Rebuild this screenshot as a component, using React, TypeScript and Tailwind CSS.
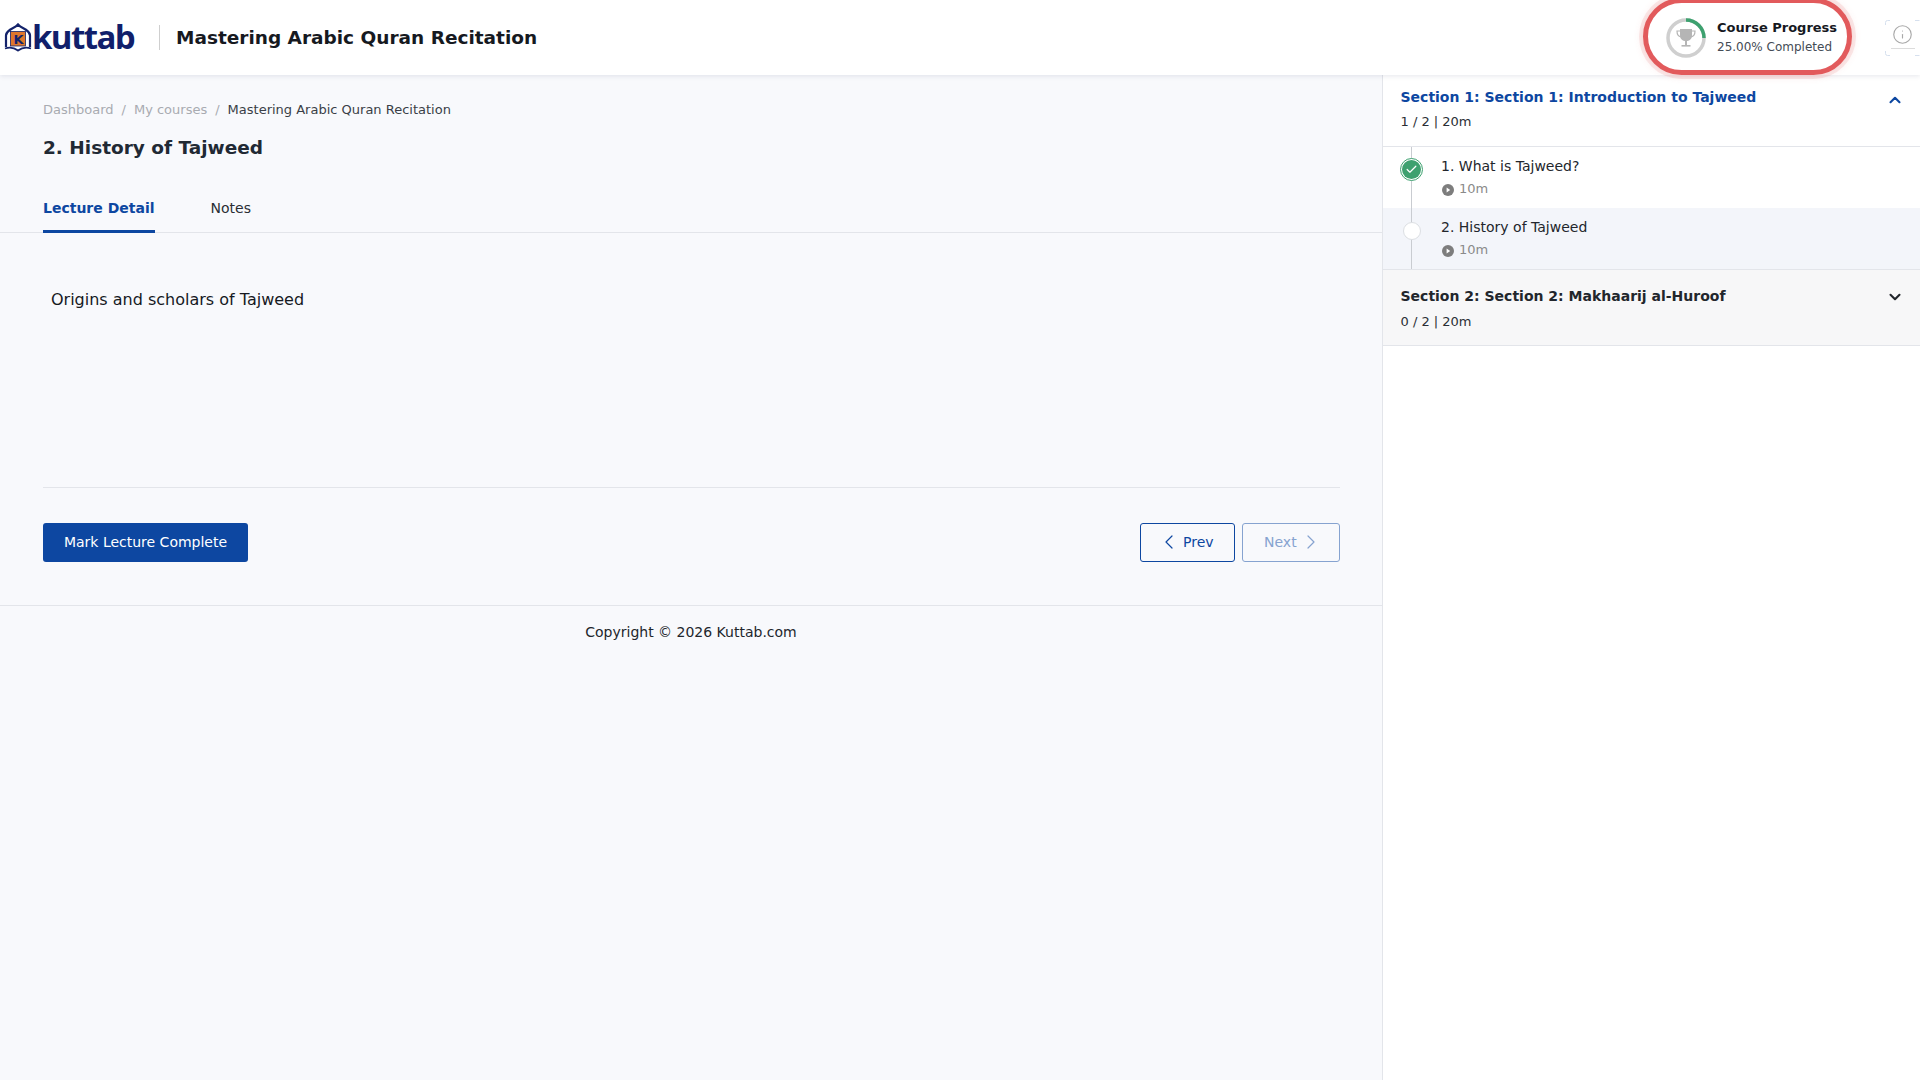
import React from 'react';
import { ChevronDown, ChevronLeft, ChevronRight, ChevronUp, Check, Info } from 'lucide-react';

function Logo() {
  return (
    <div className="flex items-center w-[136px] pl-[4px]">
      <svg width="28" height="30" viewBox="0 0 28 30" className="shrink-0">
        <path d="M2 24V12.5C2 9 4.5 8 6.5 6.5C9 5 12 4 14 1.5C16 4 19 5 21.5 6.5C23.5 8 26 9 26 12.5V24" fill="#fff" stroke="#14236b" strokeWidth="2.2" />
        <rect x="6.5" y="8.5" width="15" height="14.5" fill="#e0772c" stroke="#14236b" strokeWidth="0.8" />
        <text x="9.5" y="20.6" fontSize="13" fontWeight="700" fill="#14236b" fontFamily="'DejaVu Sans', sans-serif">K</text>
        <path d="M1 25.5C5 24 10 24.5 14 27.5C18 24.5 23 24 27 25.5" fill="none" stroke="#14236b" strokeWidth="1.8" />
      </svg>
      <span className="font-['Open_Sans',sans-serif] font-bold text-[33px] leading-none text-[#111f6b] tracking-[-1.6px] -mt-[2px]">kuttab</span>
    </div>
  );
}

function ProgressRing() {
  return (
    <svg width="40" height="40" viewBox="0 0 40 40" className="shrink-0 mt-[3px]">
      <circle cx="20" cy="20" r="18" fill="none" stroke="#cfcfcf" strokeWidth="3.5" />
      <path d="M20 2A18 18 0 0 1 38 20" fill="none" stroke="#3da16f" strokeWidth="3.5" />
      <path d="M14 11H26V17C26 21 23.5 23 20 23C16.5 23 14 21 14 17Z" fill="#b5b5b5" />
      <path d="M14 13H11C11 17 12.5 18.5 15 19M26 13H29C29 17 27.5 18.5 25 19" fill="none" stroke="#b5b5b5" strokeWidth="1.2" />
      <rect x="19" y="22" width="2" height="5" fill="#b5b5b5" />
      <rect x="15.5" y="27" width="9" height="1.6" fill="#b5b5b5" />
    </svg>
  );
}

function InfoBadge() {
  return (
    <div className="relative self-start ml-[33px] mt-[20px] w-[35px] h-[36px] flex justify-center text-[#a8a8a8]">
      <svg width="35" height="36" viewBox="0 0 35 36" className="absolute inset-0" fill="none" stroke="#d6e0ee" strokeWidth="1">
        <path d="M0.5 5V2.5Q0.5 0.5 2.5 0.5H5M30 0.5H34.5M0.5 31V33.5Q0.5 35.5 2.5 35.5H5M30 35.5H34.5" />
      </svg>
      <Info size={21} strokeWidth={1.3} className="mt-[4px]" />
      <div className="absolute left-[6px] top-[28px] w-[24px] h-[1px] bg-[#dcdcdc]" />
    </div>
  );
}

function Header() {
  return (
    <header className="relative z-10 h-[75px] shrink-0 bg-white shadow-[0_1px_5px_rgba(40,50,90,0.12)] flex items-center">
      <Logo />
      <div className="h-[25px] w-px bg-[#cfcfcf] mr-4 ml-[23px]" />
      <h1 className="text-[18.5px] font-bold text-[#16191f]">Mastering Arabic Quran Recitation</h1>
      <div className="ml-auto flex items-center self-start">
        <div className="flex items-center gap-[11px] h-[77px] w-[209px] -mt-[2px] pl-[18px] rounded-[40px] border-[5px] border-[#e25a5c] bg-white shadow-[0_0_0_4px_rgba(226,90,92,0.12),0_0_10px_rgba(226,90,92,0.2)]">
          <ProgressRing />
          <div>
            <div className="text-[13px] font-bold leading-[20px] text-[#16191f]">Course Progress</div>
            <div className="text-[12px] leading-[18px] text-[#444b55]">25.00% Completed</div>
          </div>
        </div>
        <InfoBadge />
      </div>
    </header>
  );
}

function Lecture({ title, done, active }: { title: string; done?: boolean; active?: boolean }) {
  return (
    <div className={`relative h-[61px] pl-[58px] pt-[9px] ${active ? 'bg-[#f3f5fa]' : ''}`}>
      <div className="absolute left-[28px] top-0 bottom-0 w-px bg-[#c9ccd1]" />
      {done ? (
        <div className="absolute left-[17px] top-[11px] w-[23px] h-[23px] rounded-full border border-[#3da16f] bg-white flex items-center justify-center">
          <div className="w-[19px] h-[19px] rounded-full bg-[#3da16f] flex items-center justify-center">
            <Check size={13} color="#fff" strokeWidth={2.2} />
          </div>
        </div>
      ) : (
        <div className="absolute left-[20px] top-[14px] w-[18px] h-[18px] rounded-full border border-[#dcdfe3] bg-white" />
      )}
      <div className="text-[14px] leading-[20px] text-[#22262c]">{title}</div>
      <div className="flex items-center gap-[5px] mt-[3px] text-[13px] leading-[20px] text-[#8a8a8a]">
        <svg width="12" height="12" viewBox="0 0 12 12" className="mt-[1px] ml-[1px]">
          <circle cx="6" cy="6" r="6" fill="#7d7d7d" />
          <path d="M4.6 3.6L8.2 6L4.6 8.4Z" fill="#fff" />
        </svg>
        10m
      </div>
    </div>
  );
}

function Sidebar() {
  return (
    <aside className="w-[538px] shrink-0 bg-white border-l border-[#e3e5ea]">
      <div className="h-[72px] border-b border-[#e3e5ea] pl-[17.5px] pr-[16px] pt-[12px]">
        <div className="flex items-center justify-between h-[20px]">
          <span className="text-[14px] font-bold leading-[20px] text-[#0d47a1]">Section 1: Section 1: Introduction to Tajweed</span>
          <ChevronUp size={18} strokeWidth={2.8} className="text-[#0d47a1] mt-[6px]" />
        </div>
        <div className="text-[13px] leading-[20px] mt-[5px] text-[#2a2e34]">1 / 2 | 20m</div>
      </div>
      <Lecture title="1. What is Tajweed?" done />
      <Lecture title="2. History of Tajweed" active />
      <div className="h-[77px] bg-[#f7f7f8] border-y border-[#e3e5ea] pl-[17.5px] pr-[16px] pt-[16px]">
        <div className="flex items-center justify-between h-[20px]">
          <span className="text-[14px] font-bold leading-[20px] text-[#22262c]">Section 2: Section 2: Makhaarij al-Huroof</span>
          <ChevronDown size={18} strokeWidth={2.8} className="text-[#22262c] mt-[2px]" />
        </div>
        <div className="text-[13px] leading-[20px] mt-[6px] text-[#2a2e34]">0 / 2 | 20m</div>
      </div>
    </aside>
  );
}

function Main() {
  return (
    <main className="flex-1 min-w-0">
      <div className="px-[43px] pt-[25px]">
        <div className="flex items-center text-[13px] leading-[20px] text-[#a8abb1]">
          <span>Dashboard</span>
          <span className="mx-2">/</span>
          <span>My courses</span>
          <span className="mx-2">/</span>
          <span className="text-[#3a3f47]">Mastering Arabic Quran Recitation</span>
        </div>
        <h2 className="text-[18.5px] font-bold leading-[28px] mt-[14px] text-[#212934]">2. History of Tajweed</h2>
      </div>
      <div className="mt-[22px] h-[49px] border-b border-[#e3e5ea] px-[43px] flex gap-[56px] text-[14px]">
        <div className="h-[49px] pt-[14px] font-bold text-[#0d47a1] border-b-[3px] border-[#0d47a1]">Lecture Detail</div>
        <div className="pt-[14px] text-[#2a2e34]">Notes</div>
      </div>
      <div className="pl-[43px] pr-[42px]">
        <p className="pl-[8px] pt-[55px] h-[255px] border-b border-[#e3e5ea] text-[16px] leading-[24px] text-[#16191f]">Origins and scholars of Tajweed</p>
        <div className="flex items-center justify-between mt-[34px] h-[40px]">
          <button className="h-[39px] w-[205px] rounded-[3px] bg-[#0d47a1] text-white text-[14px]">Mark Lecture Complete</button>
          <div className="flex gap-[7px]">
            <button className="h-[39px] w-[95px] rounded-[3px] border border-[#0d47a1] text-[#0d47a1] text-[14px] flex items-center pl-[16px] gap-[2px]">
              <ChevronLeft size={24} strokeWidth={1.2} />
              Prev
            </button>
            <button className="h-[39px] w-[98px] rounded-[3px] border border-[#86a3d0] text-[#86a3d0] text-[14px] flex items-center pl-[21px] gap-[2px]">
              Next
              <ChevronRight size={24} strokeWidth={1.2} />
            </button>
          </div>
        </div>
      </div>
      <footer className="mt-[43px] border-t border-[#e3e5ea] pt-[16px] text-center text-[14px] leading-[20px] text-[#22262c]">
        Copyright © 2026 Kuttab.com
      </footer>
    </main>
  );
}

export default function App() {
  return (
    <div className="h-[1080px] overflow-hidden flex flex-col bg-[#f8f9fc] font-['DejaVu_Sans',sans-serif]">
      <Header />
      <div className="flex flex-1 min-h-0">
        <Main />
        <Sidebar />
      </div>
    </div>
  );
}
